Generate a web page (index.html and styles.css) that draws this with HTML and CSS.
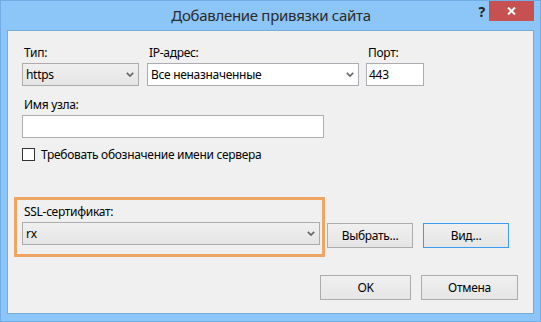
FILE: index.html
```html
<!DOCTYPE html>
<html lang="ru">
<head>
  <meta charset="UTF-8" />
  <title>Добавление привязки сайта</title>
  <link rel="stylesheet" href="styles.css">
</head>
<body>
  <div class="window">
    <div class="titlebar">
      <div></div>
      <div class="title">Добавление привязки сайта</div>
      <div class="caption-btns">
        <div class="help">?</div>
        <div class="close">
          <svg width="9" height="8" viewBox="0 0 9 8"><path d="M1 0.5 L8 7.5 M8 0.5 L1 7.5" stroke="#fff" stroke-width="2"/></svg>
        </div>
      </div>
    </div>

    <div class="client">
      <div class="row">
        <div class="field f-type">
          <div class="lbl">Тип:</div>
          <div class="combo gray"><span>https</span>
            <svg width="8" height="5" viewBox="0 0 8 5"><path d="M0.8 0.8 L4 4 L7.2 0.8" fill="none" stroke="#666" stroke-width="1.7"/></svg>
          </div>
        </div>
        <div class="field f-ip">
          <div class="lbl">IP-адрес:</div>
          <div class="combo white"><span>Все неназначенные</span>
            <svg width="8" height="5" viewBox="0 0 8 5"><path d="M0.8 0.8 L4 4 L7.2 0.8" fill="none" stroke="#666" stroke-width="1.7"/></svg>
          </div>
        </div>
        <div class="field f-port">
          <div class="lbl">Порт:</div>
          <div class="textbox">443</div>
        </div>
      </div>

      <div class="field f-host">
        <div class="lbl">Имя узла:</div>
        <div class="textbox"></div>
      </div>

      <div class="check-row">
        <span class="checkbox"></span>
        <span>Требовать обозначение имени сервера</span>
      </div>

      <div class="ssl-row">
        <div class="ssl-group">
          <div class="lbl">SSL-сертификат:</div>
          <div class="combo gray"><span>rx</span>
            <svg width="8" height="5" viewBox="0 0 8 5"><path d="M0.8 0.8 L4 4 L7.2 0.8" fill="none" stroke="#666" stroke-width="1.7"/></svg>
          </div>
        </div>
        <div class="btn btn-select">Выбрать...</div>
        <div class="btn btn-view">Вид...</div>
      </div>

      <div class="bottom-row">
        <div class="btn btn-ok">OK</div>
        <div class="btn btn-cancel">Отмена</div>
      </div>
    </div>
  </div>
</body>
</html>
```

FILE: styles.css
```css
* { box-sizing: border-box; }
body { margin: 0; font-family: "Noto Sans", "Liberation Sans", sans-serif; font-size: 12px; letter-spacing: -0.3px; color: #000; }

.window { width: 541px; height: 322px; background: #8cc5f7; border: 1px solid #72aee6; display: flex; flex-direction: column; }

.titlebar { height: 29px; display: grid; grid-template-columns: 1fr auto 1fr; }
.title { font-size: 15px; letter-spacing: -0.3px; color: #2b2b2b; line-height: 29px; padding-left: 1px; }
.caption-btns { display: flex; justify-content: flex-end; align-items: flex-start; padding-right: 6px; }
.help { font-weight: bold; font-size: 14px; color: #222; line-height: 21px; margin-right: 4px; }
.close { width: 45px; height: 20px; background: #c75050; display: flex; align-items: center; justify-content: center; }

.client { flex: 1; margin: 0 6px 7px 6px; background: #f0f0f0; border: 1px solid #78add9; padding: 14px 15px 0 14px; }

.row { display: flex; }
.lbl { line-height: 15px; height: 15px; margin-bottom: 3px; padding-left: 2px; }

.combo { height: 23px; border: 1px solid #acacac; display: flex; align-items: center; justify-content: space-between; padding: 0 4px 0 3px; }
.combo.gray { background: linear-gradient(#f0f0f0, #e5e5e5); }
.combo.white { background: #fff; border-color: #abadb3; }
.textbox { height: 23px; background: #fff; border: 1px solid #abadb3; line-height: 21px; padding-left: 2px; }

.f-type { width: 117px; }
.f-ip { width: 212px; margin-left: 8px; }
.f-port { width: 58px; margin-left: 7px; }

.f-host { width: 302px; margin-top: 11px; }

.check-row { display: flex; align-items: center; margin-top: 10px; height: 13px; }
.checkbox { width: 13px; height: 13px; background: #fff; border: 1px solid #333; margin-right: 6px; }

.ssl-row { display: flex; align-items: flex-start; margin-top: 36px; margin-left: -8px; }
.ssl-group { width: 311px; height: 60px; border: 3px solid #efa563; padding: 4px 2px 0 5px; }

.btn { height: 25px; border: 1px solid #acacac; background: linear-gradient(#f0f0f0, #e5e5e5); display: flex; align-items: center; justify-content: center; }
.btn-select { width: 86px; margin-top: 26px; margin-left: 2px; }
.btn-view { width: 86px; margin-top: 26px; margin-left: 10px; border-color: #3c9cf0; }

.bottom-row { display: flex; justify-content: flex-end; margin-top: 18px; }
.btn-ok { width: 91px; }
.btn-cancel { width: 97px; margin-left: 10px; }
```
